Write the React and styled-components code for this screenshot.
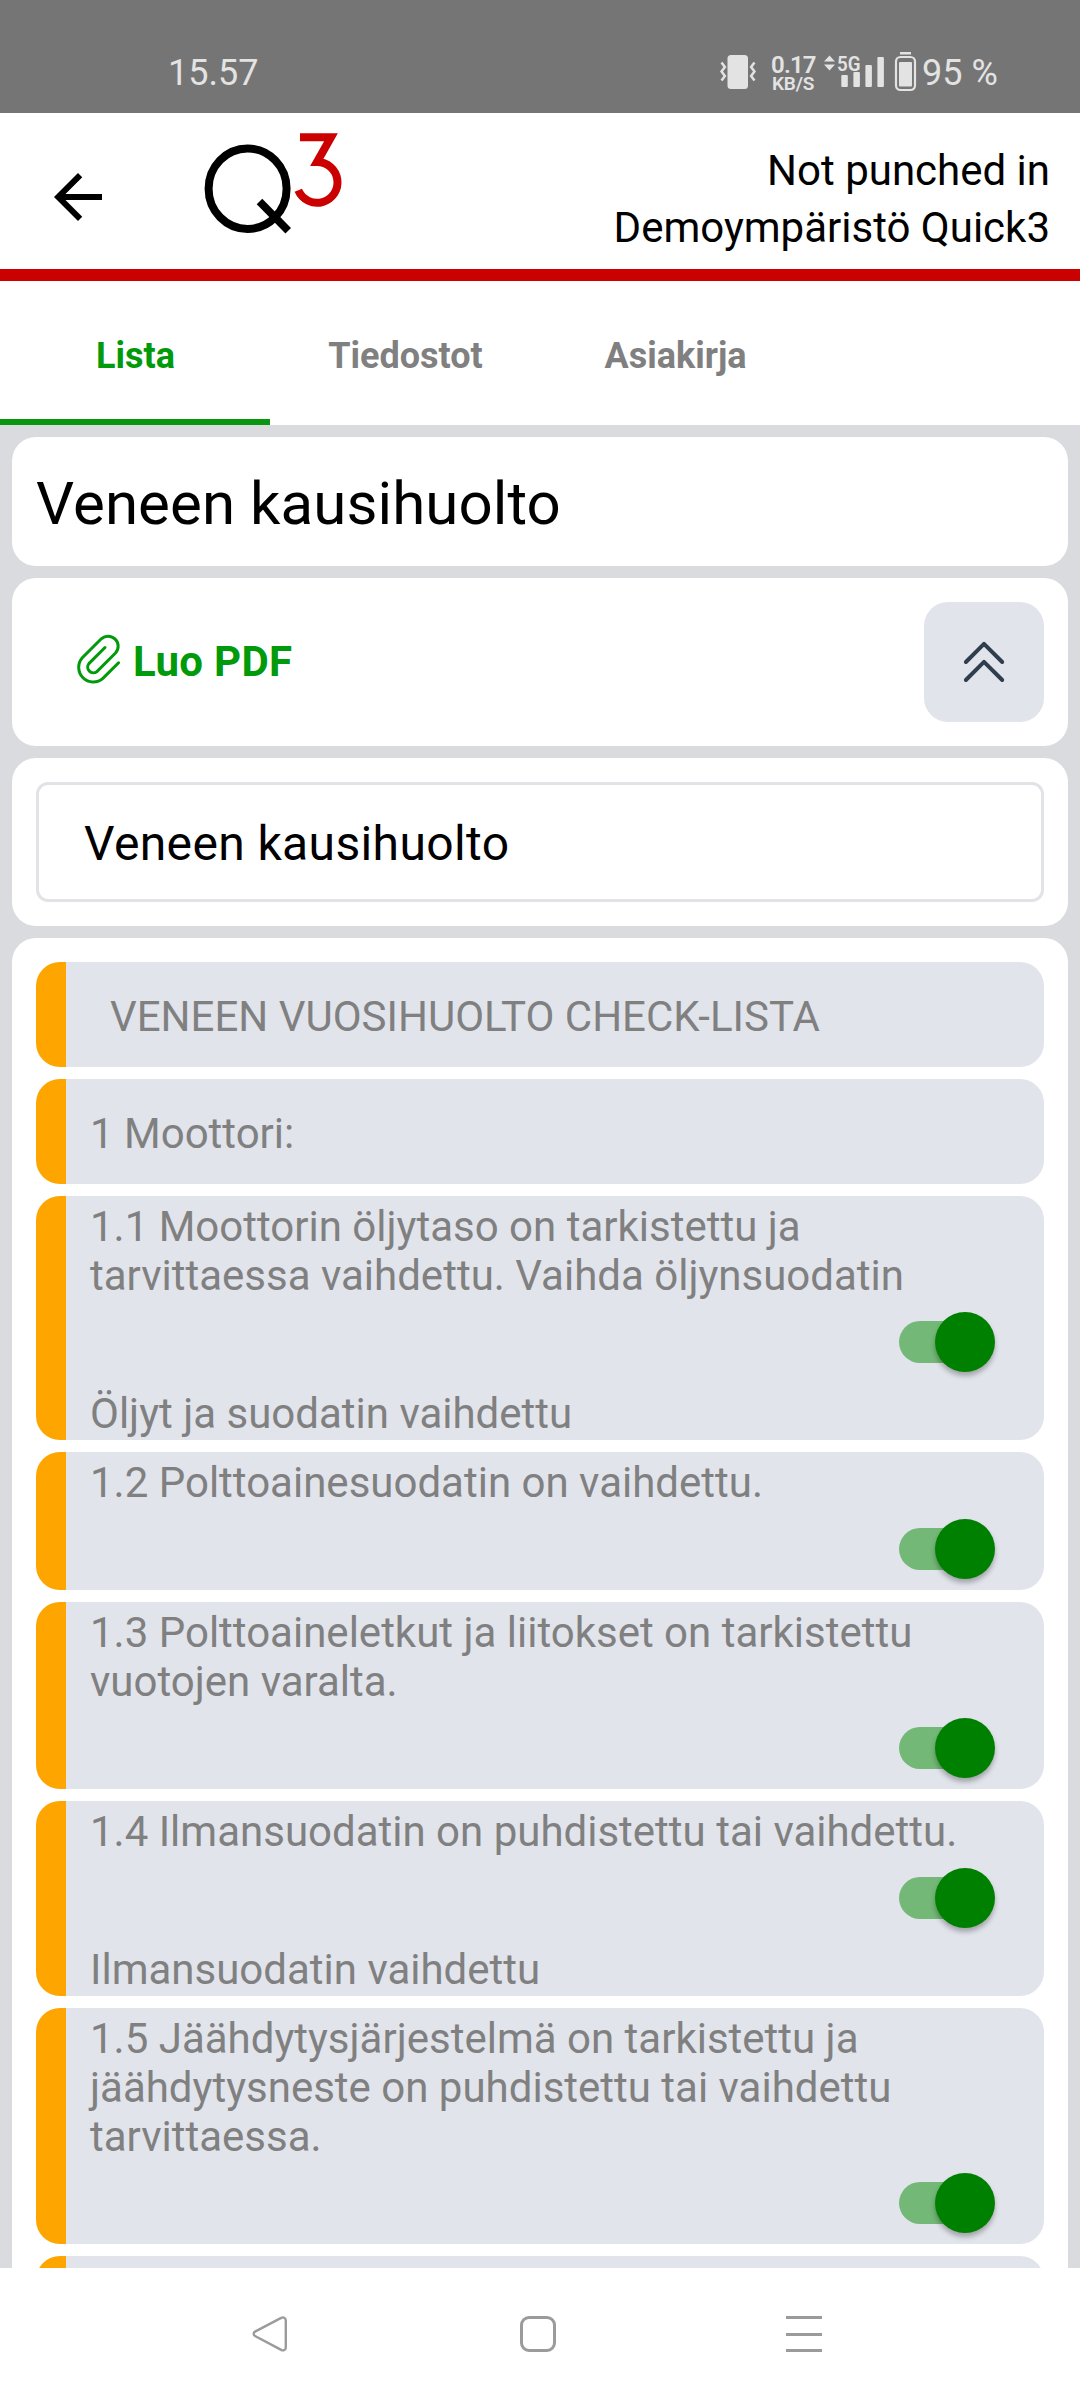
import React from 'react';
import styled, { createGlobalStyle } from 'styled-components';

//Data
const tabs = ['Lista', 'Tiedostot', 'Asiakirja'];

const tasks = [
   {
      lines: [
         '1.1 Moottorin öljytaso on tarkistettu ja',
         'tarvittaessa vaihdettu. Vaihda öljynsuodatin',
      ],
      note: 'Öljyt ja suodatin vaihdettu',
   },
   { lines: ['1.2 Polttoainesuodatin on vaihdettu.'] },
   {
      lines: [
         '1.3 Polttoaineletkut ja liitokset on tarkistettu',
         'vuotojen varalta.',
      ],
   },
   {
      lines: ['1.4 Ilmansuodatin on puhdistettu tai vaihdettu.'],
      note: 'Ilmansuodatin vaihdettu',
   },
   {
      lines: [
         '1.5 Jäähdytysjärjestelmä on tarkistettu ja',
         'jäähdytysneste on puhdistettu tai vaihdettu',
         'tarvittaessa.',
      ],
   },
];

//Icons
const VibrateIcon = () => (
   <svg width='36' height='48' viewBox='720 48 36 48' fill='#e3e3e3'>
      <rect x='727.5' y='55' width='20.5' height='34' rx='3.5' />
      <g fill='none' stroke='#e3e3e3' strokeWidth='2.5'>
         <path d='M721.5 62.5l3.4 4.5-3.4 4.5 3.4 4.5-3.4 4.5' />
         <path d='M754.5 62.5l-3.4 4.5 3.4 4.5-3.4 4.5 3.4 4.5' />
      </g>
   </svg>
);

const SignalIcon = () => (
   <svg width='94' height='48' viewBox='823 48 94 48' fill='#e3e3e3'>
      <path d='M824 61.5l5.5-6 5.5 6zM824 64.5h11l-5.5 6z' />
      <text
         x='837'
         y='70.5'
         fontSize='21'
         fontWeight='600'
         textLength='23.5'
         lengthAdjust='spacingAndGlyphs'>
         5G
      </text>
      <rect x='841.3' y='75' width='6.5' height='12' rx='1' />
      <rect x='853.4' y='72' width='6.5' height='15' rx='1' />
      <rect x='865.4' y='65' width='6.5' height='22' rx='1' />
      <rect x='877.4' y='57' width='6.5' height='30' rx='1' />
      <rect x='900' y='52' width='11' height='2.5' />
      <rect
         x='896'
         y='57'
         width='19'
         height='33'
         rx='4.5'
         fill='none'
         stroke='#e3e3e3'
         strokeWidth='2.2'
      />
      <rect x='899' y='62' width='13' height='24.5' rx='1' />
   </svg>
);

const BackIcon = () => (
   <svg width='72' height='72' viewBox='0 0 24 24'>
      <path d='M20 11H7.83l5.59-5.59L12 4l-8 8 8 8 1.41-1.41L7.83 13H20v-2z' />
   </svg>
);

const Logo = () => (
   <svg width='140' height='102' viewBox='203 132 140 102' fill='none'>
      <ellipse
         cx='247.6'
         cy='188.7'
         rx='39'
         ry='40.2'
         stroke='#000'
         strokeWidth='8'
      />
      <path d='M259.5 201.5L288.2 230.7' stroke='#000' strokeWidth='7.8' />
      <path
         d='M300 137.3H331L317 162A20.4 20.4 0 1 1 298.3 190.3'
         stroke='#cb0000'
         strokeWidth='8'
      />
   </svg>
);

const ClipIcon = () => (
   <svg width='46' height='54' viewBox='76 632 46 54' fill='none'>
      <path
         d='M106 646.5L89.9 662.6A5.7 5.7 0 0 0 97.9 670.6L116.5 652A10.05 10.05 0 0 0 102.3 637.8L83.3 656.8A14.6 14.6 0 0 0 103.9 677.4L119.6 661.8'
         stroke='#009a0a'
         strokeWidth='3'
         strokeLinecap='round'
      />
   </svg>
);

const CollapseIcon = () => (
   <svg width='48' height='48' viewBox='960 638 48 48' fill='none'>
      <path
         d='M965.9 662L984 643.9L1002.2 662M965.9 680L984 661.9L1002.2 680'
         stroke='#2f3e4e'
         strokeWidth='4'
         strokeLinecap='round'
         strokeLinejoin='round'
      />
   </svg>
);

const NavBackIcon = () => (
   <svg width='36' height='36' viewBox='252 2316 36 36' fill='none'>
      <path
         d='M281.2 2317.9L255 2331.6a2.5 2.5 0 0 0 0 4.4L281.2 2349.9a3 3 0 0 0 4.6-2.5V2320.4a3 3 0 0 0-4.6-2.5z'
         stroke='#9b9b9b'
         strokeWidth='2.4'
      />
   </svg>
);

const Task = ({ lines, note }) => (
   <TaskRow>
      {lines.map((line) => (
         <p key={line}>{line}</p>
      ))}
      <Toggle>
         <Track />
         <Thumb />
      </Toggle>
      {note && <Note>{note}</Note>}
   </TaskRow>
);

const App = () => {
   return (
      <Screen>
         <GlobalStyle />
         <StatusBar>
            <Clock>15.57</Clock>
            <VibrateIcon />
            <NetSpeed>
               <Speed>0.17</Speed>
               <Unit>KB/S</Unit>
            </NetSpeed>
            <SignalIcon />
            <Battery>95 %</Battery>
         </StatusBar>
         <Header>
            <BackIcon />
            <LogoWrap>
               <Logo />
            </LogoWrap>
            <UserInfo>
               <p>Not punched in</p>
               <p>Demoympäristö Quick3</p>
            </UserInfo>
         </Header>
         <Tabs>
            {tabs.map((tab, i) => (
               <Tab key={tab} $active={i === 0}>
                  {tab}
               </Tab>
            ))}
         </Tabs>
         <Content>
            <TitleCard>
               <h1>Veneen kausihuolto</h1>
            </TitleCard>
            <ActionCard>
               <PdfButton>
                  <ClipIcon />
                  <span>Luo PDF</span>
               </PdfButton>
               <CollapseButton>
                  <CollapseIcon />
               </CollapseButton>
            </ActionCard>
            <Card>
               <NameField>Veneen kausihuolto</NameField>
            </Card>
            <ListCard>
               <HeadingRow $indent>VENEEN VUOSIHUOLTO CHECK-LISTA</HeadingRow>
               <HeadingRow>1 Moottori:</HeadingRow>
               {tasks.map((task) => (
                  <Task key={task.lines[0]} {...task} />
               ))}
               <HeadingRow />
            </ListCard>
         </Content>
         <NavBar>
            <NavBackIcon />
            <HomeButton />
            <MenuButton>
               <span />
               <span />
               <span />
            </MenuButton>
         </NavBar>
      </Screen>
   );
};

//Styling
const GlobalStyle = createGlobalStyle`
   * {
      box-sizing: border-box;
      margin: 0;
      padding: 0;
   }
   body {
      font-family: Roboto, sans-serif;
      background: white;
   }
   svg {
      display: block;
      flex-shrink: 0;
   }
`;

const Screen = styled.div`
   width: 1080px;
   height: 2400px;
   display: flex;
   flex-direction: column;
   overflow: hidden;
   color: black;
`;

const StatusBar = styled.div`
   height: 113px;
   flex-shrink: 0;
   display: flex;
   align-items: flex-start;
   padding: 48px 0 0 168px;
   background: #757575;
   color: #e3e3e3;
   font-size: 36px;
   line-height: 50px;
`;

const Clock = styled.span`
   width: 552px;
`;

const NetSpeed = styled.div`
   width: 67px;
   padding: 8px 0 0 15px;
   font-weight: 600;
   white-space: nowrap;
`;

const Speed = styled.p`
   font-size: 24px;
   line-height: 18px;
   letter-spacing: -0.8px;
`;

const Unit = styled.p`
   margin-top: 1px;
   padding-left: 1px;
   font-size: 19px;
   line-height: 18px;
   letter-spacing: -0.2px;
`;

const Battery = styled.span`
   margin-left: 5px;
   white-space: nowrap;
`;

const Header = styled.header`
   height: 168px;
   flex-shrink: 0;
   display: flex;
   align-items: center;
   padding: 0 30px 0 42px;
   border-bottom: 12px solid #cb0000;
   > svg {
      margin-top: 12px;
   }
`;

const LogoWrap = styled.div`
   margin: -16px auto 0 89px;
`;

const UserInfo = styled.div`
   margin-top: 16px;
   font-size: 42px;
   line-height: 57px;
   text-align: right;
`;

const Tabs = styled.nav`
   height: 144px;
   flex-shrink: 0;
   display: flex;
`;

const Tab = styled.div`
   width: 270px;
   padding: 6px 0 0 1px;
   border-bottom: 6px solid ${(props) => (props.$active ? '#08960f' : 'white')};
   color: ${(props) => (props.$active ? '#009a0a' : '#808080')};
   font-size: 36px;
   font-weight: 700;
   line-height: 138px;
   text-align: center;
`;

const Content = styled.main`
   flex: 1;
   min-height: 0;
   overflow: hidden;
   display: flex;
   flex-direction: column;
   gap: 12px;
   padding: 12px 12px 0;
   background: #dadbdf;
`;

const Card = styled.section`
   flex-shrink: 0;
   padding: 24px;
   border-radius: 24px;
   background: white;
`;

const TitleCard = styled(Card)`
   height: 129px;
   h1 {
      font-size: 60px;
      font-weight: 400;
      line-height: 86px;
      letter-spacing: 0.08px;
   }
`;

const ActionCard = styled(Card)`
   height: 168px;
   display: flex;
   align-items: center;
   justify-content: space-between;
`;

const PdfButton = styled.div`
   display: flex;
   align-items: center;
   gap: 12px;
   margin: -2px 0 0 39px;
   color: #009a0a;
   font-size: 42px;
   font-weight: 700;
   letter-spacing: 0.3px;
   svg {
      margin-bottom: 3px;
   }
`;

const CollapseButton = styled.div`
   width: 120px;
   height: 120px;
   display: flex;
   align-items: center;
   justify-content: center;
   border-radius: 24px;
   background: #e2e4ec;
`;

const NameField = styled.div`
   height: 120px;
   padding-left: 45px;
   border: 3px solid #e2e3e7;
   border-radius: 12px;
   font-size: 48px;
   line-height: 118px;
   letter-spacing: 0.37px;
`;

const ListCard = styled(Card)`
   display: flex;
   flex-direction: column;
   gap: 12px;
`;

const Row = styled.div`
   flex-shrink: 0;
   border-left: 30px solid #ffa500;
   border-radius: 24px;
   background: #e2e4ec;
   color: #808080;
   font-size: 42px;
   line-height: 49px;
   white-space: nowrap;
`;

const HeadingRow = styled(Row)`
   height: 105px;
   padding: 30px 24px 0 ${(props) => (props.$indent ? 44 : 24)}px;
`;

const TaskRow = styled(Row)`
   padding: 6px 49px 0 24px;
`;

const Toggle = styled.div`
   display: flex;
   align-items: center;
   justify-content: flex-end;
   padding: 12px 0 11px;
`;

const Track = styled.div`
   width: 90px;
   height: 42px;
   border-radius: 21px;
   background: #73b876;
`;

const Thumb = styled.div`
   width: 60px;
   height: 60px;
   margin-left: -54px;
   border-radius: 50%;
   background: #008000;
   box-shadow: 0 4px 5px rgba(0, 0, 0, 0.28);
`;

const Note = styled.p`
   padding: 6px 0 2px;
`;

const NavBar = styled.footer`
   height: 132px;
   flex-shrink: 0;
   display: flex;
   justify-content: space-between;
   padding: 48px 258px 0 252px;
   background: white;
`;

const HomeButton = styled.div`
   width: 36px;
   height: 36px;
   margin-left: 2px;
   border: 3px solid #9b9b9b;
   border-radius: 9px;
`;

const MenuButton = styled.div`
   width: 36px;
   height: 36px;
   display: flex;
   flex-direction: column;
   justify-content: space-between;
   span {
      height: 3px;
      background: #9b9b9b;
   }
`;

export default App;
